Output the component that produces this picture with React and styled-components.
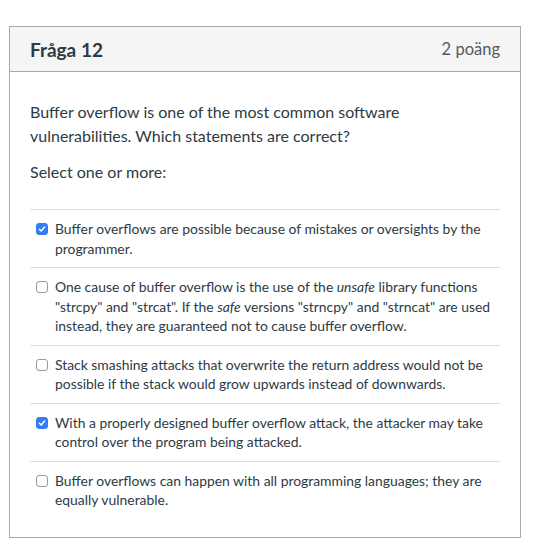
import React from "react";
import styled, { createGlobalStyle } from "styled-components";

const Global = createGlobalStyle`
  html, body { margin: 0; padding: 0; background: #ffffff; }
  body { font-family: Lato, "Noto Sans", sans-serif; color: #2d3b45; }
`;

const Page = styled.div`
  padding: 26px 0 0 9px;
`;

const Card = styled.section`
  box-sizing: border-box;
  width: 512px;
  border: 1px solid #a9a9a9;
  background: #fff;
`;

const Header = styled.header`
  display: flex;
  align-items: center;
  justify-content: space-between;
  height: 44px;
  padding: 0 20px;
  background: #f5f5f5;
  border-bottom: 1px solid #a9a9a9;
`;

const Title = styled.h2`
  margin: 0;
  font-size: 19px;
  font-weight: 700;
  color: #2d3b45;
`;

const Points = styled.span`
  font-size: 16.5px;
  color: #555a5e;
`;

const Body = styled.div`
  padding: 28px 20px 18px;
`;

const Para = styled.p`
  margin: 0 0 12px;
  font-size: 16px;
  line-height: 24px;
`;

const Options = styled.ul`
  list-style: none;
  margin: 25px 0 0;
  padding: 0;
`;

const Option = styled.li`
  display: flex;
  align-items: flex-start;
  gap: 7px;
  padding: 9px 0 9px 6px;
  border-top: 1px solid #dcdcdc;
  font-size: 13.9px;
  line-height: 19.5px;
`;

const Box = styled.span`
  flex: none;
  box-sizing: border-box;
  width: 12px;
  height: 12px;
  margin-top: 4px;
  border-radius: 3px;
  display: flex;
  align-items: center;
  justify-content: center;
  background: ${(p) => (p.$checked ? "#2f7ef6" : "#ffffff")};
  border: 1px solid ${(p) => (p.$checked ? "#2f7ef6" : "#9a9a9a")};
`;

const Check = () => (
  <svg width="8" height="8" viewBox="0 0 8 8">
    <path d="M1.4 4.2 L3.2 6 L6.6 2" fill="none" stroke="#fff" strokeWidth="1.5" strokeLinecap="round" strokeLinejoin="round" />
  </svg>
);

const OptText = styled.span`
  flex: 1;
`;

const options = [
  { checked: true, text: <>Buffer overflows are possible because of mistakes or oversights by the programmer.</> },
  {
    checked: false,
    text: (
      <>
        One cause of buffer overflow is the use of the <i>unsafe</i> library functions "strcpy" and "strcat". If the{" "}
        <i>safe</i> versions "strncpy" and "strncat" are used instead, they are guaranteed not to cause buffer overflow.
      </>
    ),
  },
  { checked: false, text: <>Stack smashing attacks that overwrite the return address would not be possible if the stack would grow upwards instead of downwards.</> },
  { checked: true, text: <>With a properly designed buffer overflow attack, the attacker may take control over the program being attacked.</> },
  { checked: false, text: <>Buffer overflows can happen with all programming languages; they are equally vulnerable.</> },
];

export default function App() {
  return (
    <Page>
      <Global />
      <Card>
        <Header>
          <Title>Fråga 12</Title>
          <Points>2 poäng</Points>
        </Header>
        <Body>
          <Para>Buffer overflow is one of the most common software vulnerabilities. Which statements are correct?</Para>
          <Para>Select one or more:</Para>
          <Options>
            {options.map((o, i) => (
              <Option key={i}>
                <Box $checked={o.checked}>{o.checked && <Check />}</Box>
                <OptText>{o.text}</OptText>
              </Option>
            ))}
          </Options>
        </Body>
      </Card>
    </Page>
  );
}
